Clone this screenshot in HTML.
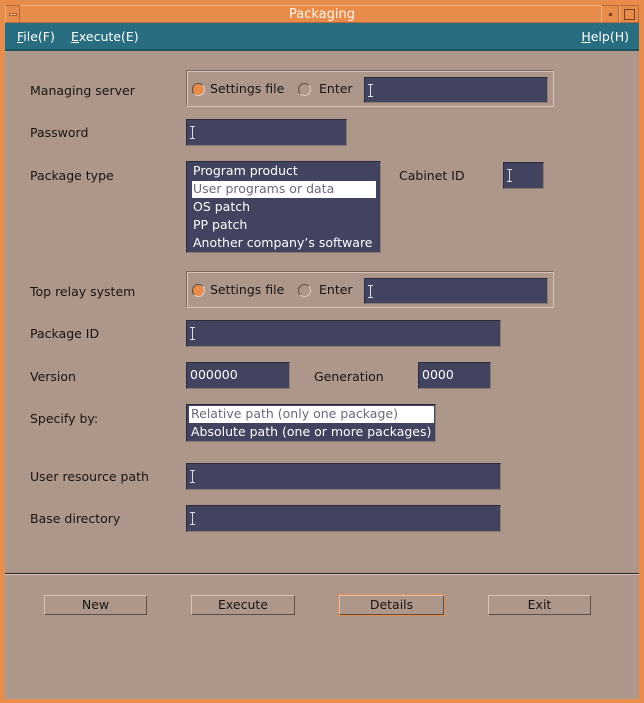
<!DOCTYPE html>
<html><head><meta charset="utf-8"><style>
*{margin:0;padding:0;box-sizing:border-box}
body{width:644px;height:703px;background:#e88c4c;position:relative;overflow:hidden;font-family:"DejaVu Sans","Liberation Sans",sans-serif;font-size:12.5px;color:#1a1410}
.a{position:absolute}
.title{left:5px;top:5px;width:634px;height:18px;background:#e88c4c;color:#fff4e8;text-align:center;line-height:18px;font-size:13px;border-top:1px solid #f5b07f;border-bottom:1px solid #b9683a}
.tb{position:absolute;top:5px;height:18px;border:1px solid #b9683a;border-left-color:#f5b07f}
.menu{left:5px;top:23px;width:634px;height:28px;background:#286e80;color:#fff;line-height:28px;border-bottom:2px solid #1d5261}
.content{left:5px;top:51px;width:634px;height:648px;background:#ad978b}
.f{position:absolute;background:#42435e;border:1px solid #2a2a3c;border-right-color:#8a7a74;border-bottom-color:#8a7a74;color:#fff;font-size:12.5px;line-height:24px}
.cur{position:absolute;left:3px;top:6px;width:5px;height:13px;}
.cur:before{content:"";position:absolute;left:2px;top:0;width:1px;height:13px;background:#ddd}
.cur:after{content:"";position:absolute;left:0;top:0;width:5px;height:13px;border-top:1px solid #ddd;border-bottom:1px solid #ddd;box-sizing:border-box}
.lbl{position:absolute;left:30px;font-size:12.5px}
.grp{position:absolute;border:1px solid #7c6a62;border-right-color:#d6c4ba;border-bottom-color:#d6c4ba;box-shadow:inset 1px 1px 0 #d6c4ba}
.rad{position:absolute;width:13px;height:13px;border-radius:50%;border:1px solid #5a4a44;border-right-color:#e0d0c8;border-bottom-color:#e0d0c8}
.li{position:absolute;left:6px;font-size:12.5px;color:#fff;white-space:nowrap;line-height:18px}
.btn{position:absolute;top:595px;height:20px;border:1px solid #d6c4ba;border-right-color:#5e4e48;border-bottom-color:#5e4e48;text-align:center;line-height:18px;font-size:12.5px}
</style></head><body>
<div class="a title">Packaging</div>
<div class="tb" style="left:5px;width:15px"><div class="a" style="left:3px;top:7px;width:8px;height:3px;background:#f5c49e;border:1px solid #a85c30"></div></div>
<div class="tb" style="left:601px;width:18px"><div class="a" style="left:7px;top:7px;width:3px;height:3px;background:#7a4020"></div></div>
<div class="tb" style="left:619px;width:20px"><div class="a" style="left:4px;top:3px;width:11px;height:11px;border:1px solid #7a4020"></div></div>
<div class="a menu"><span style="position:absolute;left:12px"><u>F</u>ile(F)</span><span style="position:absolute;left:66px"><u>E</u>xecute(E)</span><span style="position:absolute;right:10px"><u>H</u>elp(H)</span></div>
<div class="a content"></div>

<div class="lbl" style="top:83px">Managing server</div>
<div class="grp" style="left:186px;top:70px;width:368px;height:37px"></div>
<div class="rad" style="left:192px;top:83px;background:#e88c4c"></div>
<div class="a" style="left:210px;top:81px">Settings file</div>
<div class="rad" style="left:298px;top:83px"></div>
<div class="a" style="left:319px;top:81px">Enter</div>
<div class="f" style="left:364px;top:77px;width:184px;height:26px"><div class="cur"></div></div>

<div class="lbl" style="top:125px">Password</div>
<div class="f" style="left:186px;top:119px;width:161px;height:27px"><div class="cur"></div></div>

<div class="lbl" style="top:168px">Package type</div>
<div class="f" style="left:186px;top:161px;width:195px;height:92px">
<div class="li" style="top:0px">Program product</div>
<div class="a" style="left:5px;top:19px;width:184px;height:17px;background:#fff"></div>
<div class="li" style="top:18px;color:#6a6a7a">User programs or data</div>
<div class="li" style="top:36px">OS patch</div>
<div class="li" style="top:54px">PP patch</div>
<div class="li" style="top:72px">Another company’s software</div>
</div>
<div class="a" style="left:399px;top:168px">Cabinet ID</div>
<div class="f" style="left:503px;top:162px;width:41px;height:27px"><div class="cur"></div></div>

<div class="lbl" style="top:284px">Top relay system</div>
<div class="grp" style="left:186px;top:271px;width:368px;height:37px"></div>
<div class="rad" style="left:192px;top:284px;background:#e88c4c"></div>
<div class="a" style="left:210px;top:282px">Settings file</div>
<div class="rad" style="left:298px;top:284px"></div>
<div class="a" style="left:319px;top:282px">Enter</div>
<div class="f" style="left:364px;top:278px;width:184px;height:26px"><div class="cur"></div></div>

<div class="lbl" style="top:326px">Package ID</div>
<div class="f" style="left:186px;top:320px;width:315px;height:27px"><div class="cur"></div></div>

<div class="lbl" style="top:369px">Version</div>
<div class="f" style="left:186px;top:362px;width:104px;height:27px;padding-left:3px">000000</div>
<div class="a" style="left:314px;top:369px">Generation</div>
<div class="f" style="left:418px;top:362px;width:73px;height:27px;padding-left:3px">0000</div>

<div class="lbl" style="top:411px">Specify by:</div>
<div class="f" style="left:186px;top:404px;width:250px;height:38px">
<div class="a" style="left:2px;top:1px;width:245px;height:17px;background:#fff"></div>
<div class="li" style="left:4px;top:0px;color:#6a6a7a">Relative path (only one package)</div>
<div class="li" style="left:4px;top:18px">Absolute path (one or more packages)</div>
</div>

<div class="lbl" style="top:469px">User resource path</div>
<div class="f" style="left:186px;top:463px;width:315px;height:27px"><div class="cur"></div></div>

<div class="lbl" style="top:511px">Base directory</div>
<div class="f" style="left:186px;top:505px;width:315px;height:27px"><div class="cur"></div></div>

<div class="a" style="left:5px;top:573px;width:634px;height:1px;background:#2a2420"></div>
<div class="a" style="left:5px;top:574px;width:634px;height:1px;background:#d6c4ba"></div>

<div class="btn" style="left:44px;width:103px">New</div>
<div class="btn" style="left:191px;width:104px">Execute</div>
<div class="btn" style="left:339px;width:105px;outline:1px solid #e88c4c">Details</div>
<div class="btn" style="left:488px;width:103px">Exit</div>
</body></html>
